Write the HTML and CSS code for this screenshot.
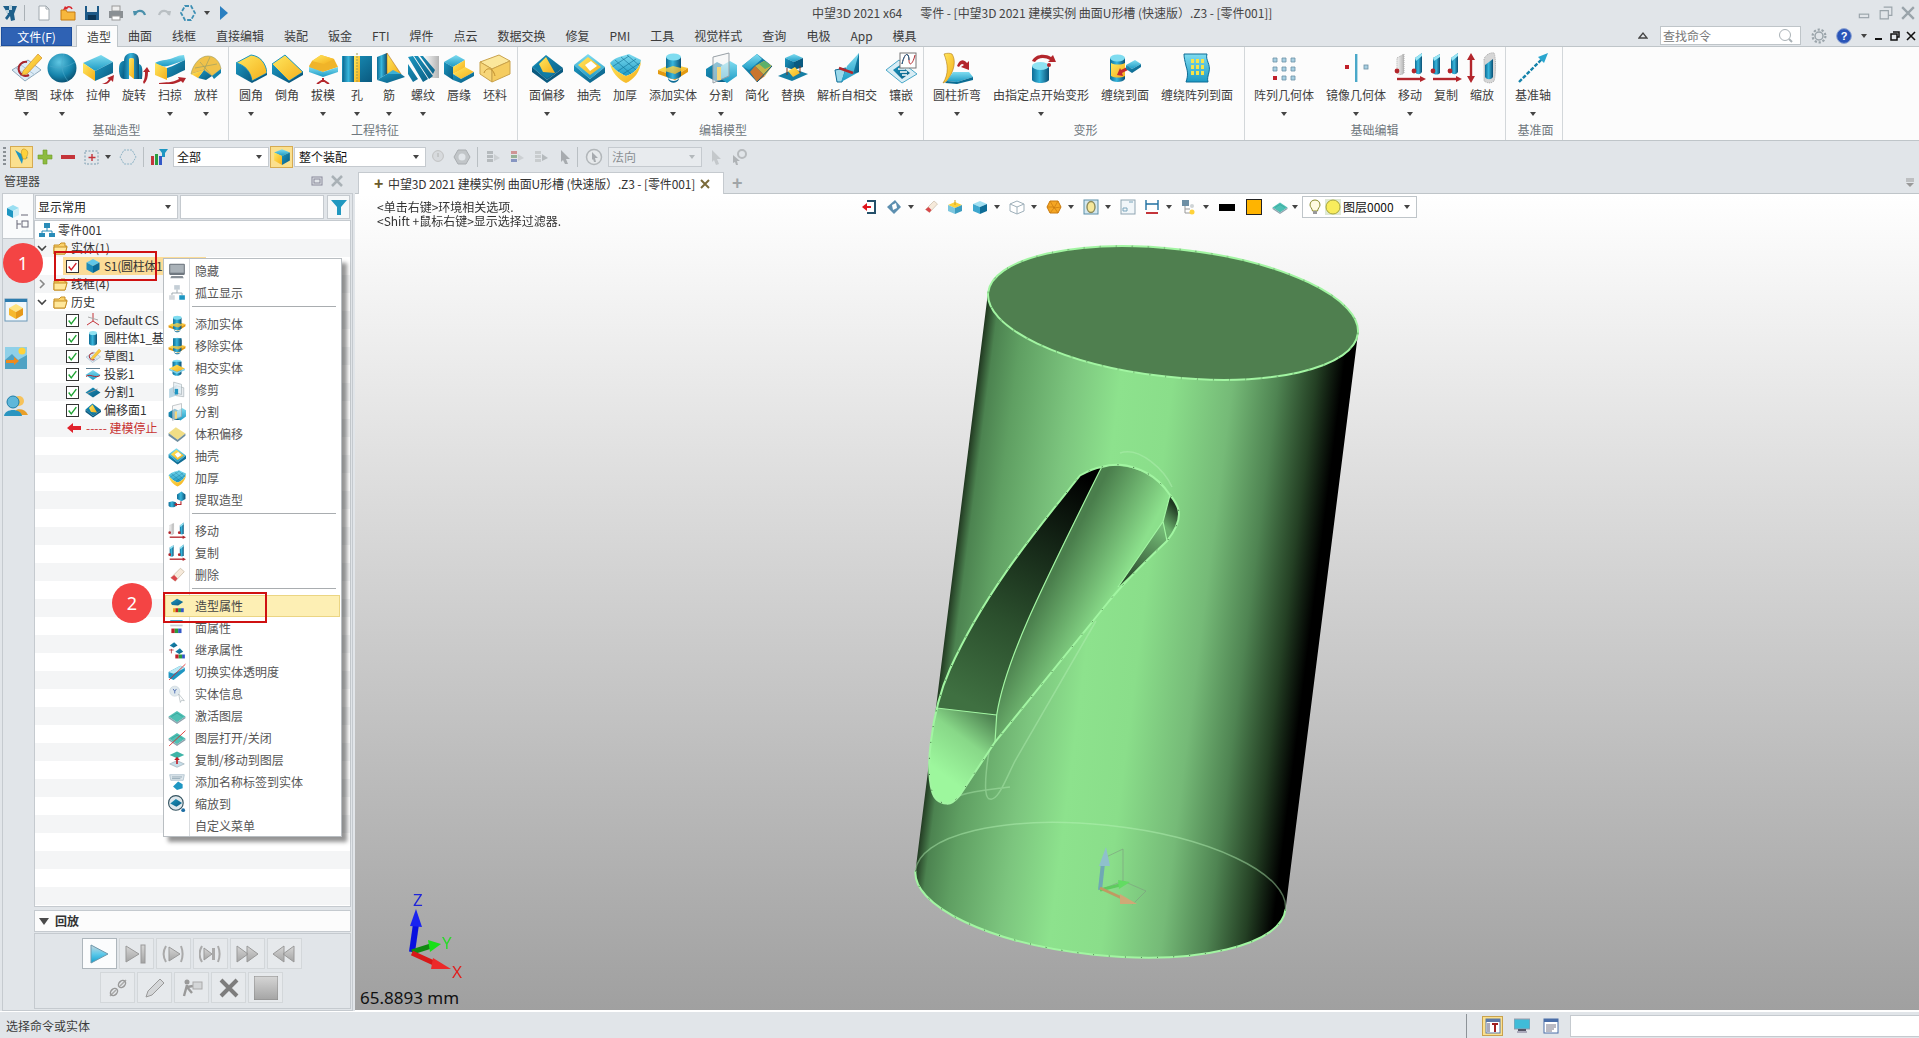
FILE: index.html
```html
<!DOCTYPE html>
<html lang="zh">
<head>
<meta charset="utf-8">
<title>中望3D 2021</title>
<link rel="stylesheet" href="styles.css">
</head>
<body>
<svg class="defs" aria-hidden="true">
<defs>
<linearGradient id="gT" x1="0" y1="0" x2="0" y2="1"><stop offset="0" stop-color="#7fdcf0"/><stop offset="1" stop-color="#1c9ac4"/></linearGradient>
<linearGradient id="gS" x1="0" y1="0" x2="1" y2="1"><stop offset="0" stop-color="#1b96c0"/><stop offset="1" stop-color="#0a5a80"/></linearGradient>
<linearGradient id="gY" x1="0" y1="0" x2="1" y2="1"><stop offset="0" stop-color="#ffe860"/><stop offset="1" stop-color="#f4ae1a"/></linearGradient>
<linearGradient id="gC" x1="0" y1="0" x2="1" y2="0"><stop offset="0" stop-color="#0d6c96"/><stop offset=".45" stop-color="#38b6dc"/><stop offset="1" stop-color="#0a4f74"/></linearGradient>
<linearGradient id="gG" x1="0" y1="0" x2="1" y2="0"><stop offset="0" stop-color="#f4f4f4"/><stop offset="1" stop-color="#b4b4b4"/></linearGradient>
<radialGradient id="gB" cx=".4" cy=".3" r=".8"><stop offset="0" stop-color="#5fc6e2"/><stop offset=".6" stop-color="#1583ab"/><stop offset="1" stop-color="#07415f"/></radialGradient>
<linearGradient id="gPlay" x1="0" y1="0" x2="0" y2="1"><stop offset="0" stop-color="#c9d6dc"/><stop offset=".5" stop-color="#5ec9ea"/><stop offset="1" stop-color="#12a1d0"/></linearGradient>
<linearGradient id="gGray" x1="0" y1="0" x2="0" y2="1"><stop offset="0" stop-color="#d6d6d6"/><stop offset="1" stop-color="#a4a4a4"/></linearGradient>

<g id="sketch"><path d="M2 18 18 8 31 18 15 29Z" fill="#dcebf6" stroke="#8fa9bb"/><path d="M6 16 20 26M11 13 25 23M10 24 23 14" stroke="#a9c3d6" fill="none"/><path d="M17 10A7 7 0 1 0 19 23" fill="none" stroke="#a8242c" stroke-width="2"/><path d="M13 19 28 2 32 6 17 22 12 23Z" fill="url(#gY)" stroke="#d38e2a" stroke-width=".7"/></g>
<g id="sphere"><circle cx="16" cy="16" r="14.5" fill="url(#gB)"/><path d="M4 14C12 17 22 15 29 10M18 2C14 12 16 22 22 29" stroke="#4aa8c9" stroke-width=".6" fill="none"/></g>
<g id="extrude"><path d="M1 11 19 3 31 10 13 19Z" fill="url(#gT)"/><path d="M1 11 13 19V29L1 21Z" fill="url(#gY)"/><path d="M13 19 31 10V21L13 29Z" fill="url(#gS)"/><path d="M20 32C24 31 26 29 27 27L25 26 32 23 31 30 29 28C27 31 24 33 20 32Z" fill="#b3262c"/></g>
<g id="revolve"><path d="M1 17C1 10 4 9 6 9V27C3 27 1 24 1 17Z" fill="url(#gS)"/><path d="M6 9C6 2 11 1 14 1 18 1 21 3 21 9V27H16V7C14 6 12 6 11 7V27H6Z" fill="url(#gC)"/><path d="M11 7C13 6 15 6 16 7V27L11 23Z" fill="url(#gY)"/><path d="M21 12C24 13 25 16 24 27H21Z" fill="url(#gS)"/><path d="M25 30C27 27 27 23 27 20H25L29 15 32 20H30C30 25 29 29 26 32Z" fill="#b3262c"/></g>
<g id="sweep"><path d="M1 11C6 8 12 8 16 7 20 6 24 3 30 3L31 8C26 10 20 12 14 14 9 15 6 14 1 11Z" fill="url(#gT)"/><path d="M1 11 13 16V28L1 23Z" fill="url(#gY)"/><path d="M13 16C20 14 26 10 31 8V18C26 20 20 24 13 26Z" fill="url(#gS)"/><path d="M5 31C12 30 18 31 25 27L24 25 32 26 29 31 27 29C20 33 12 33 5 32Z" fill="#b3262c"/></g>
<g id="loft"><path d="M1 22C3 12 10 4 18 4 25 4 30 10 31 17L22 24 14 18Z" fill="#f0c24a" stroke="#9a9a60" stroke-width=".6"/><path d="M14 18 22 24 16 28 8 26Z" fill="url(#gS)"/><path d="M1 22 14 18 8 26Z" fill="url(#gY)"/><path d="M22 24 31 17V21L24 27Z" fill="#1583ab"/><path d="M10 10 22 24M20 5 14 18M5 16 27 12" stroke="#8f9b6a" stroke-width=".6" fill="none"/></g>
<g id="fillet"><path d="M1 11 16 3C25 4 31 11 32 21L17 29C16 20 10 13 1 11Z" fill="url(#gY)" stroke="#1b96c0"/><path d="M1 11C10 13 16 20 17 29V31L1 22Z" fill="url(#gS)"/><path d="M17 29 32 21V23L17 31Z" fill="#0a5a80"/></g>
<g id="chamfer"><path d="M1 12 14 3 32 20 18 29Z" fill="url(#gY)" stroke="#1b96c0"/><path d="M1 12 18 29V31L1 22Z" fill="url(#gS)"/><path d="M18 29 32 20V23L18 31Z" fill="#0a5a80"/></g>
<g id="draft"><path d="M2 14 5 9 14 3 27 7 31 15 16 20 3 17Z" fill="#f0b429"/><path d="M5 9 14 3 27 7 17 12Z" fill="url(#gY)"/><path d="M2 15 16 20 31 15V20L16 25 2 20Z" fill="url(#gT)"/><path d="M16 26V29M16 28 10 32M16 28 22 32" stroke="#b3262c" stroke-width="2" fill="none"/></g>
<g id="hole"><rect x="1" y="4" width="30" height="26" fill="url(#gS)"/><rect x="2" y="4" width="12" height="26" fill="url(#gC)"/><rect x="13" y="4" width="6" height="26" fill="url(#gY)"/><path d="M16 1V31" stroke="#9e9a52" stroke-dasharray="2 1"/></g>
<g id="rib"><path d="M4 5 14 1V22L4 28Z" fill="url(#gC)"/><path d="M14 1 28 22 14 22Z" fill="url(#gY)" stroke="#a05a10" stroke-width=".5"/><path d="M4 28 14 22 28 22 32 25 14 31Z" fill="url(#gS)"/><path d="M14 22 20 18 28 22Z" fill="#3cb0d6"/></g>
<g id="thread"><rect x="18" y="4" width="14" height="22" fill="url(#gG)"/><path d="M1 5 6 4 21 27 16 30ZM7 4 11 4 26 24 22 27ZM13 4 16 4 28 18 26 22ZM1 12 11 27 6 30 1 22Z" fill="url(#gS)"/></g>
<g id="lip"><path d="M1 10 13 3 22 8 10 15Z" fill="url(#gT)"/><path d="M1 10 10 15V28L1 22Z" fill="url(#gS)"/><path d="M10 15 22 8V16L10 22Z" fill="url(#gY)"/><path d="M10 22 22 15 31 20 18 27Z" fill="url(#gY)"/><path d="M10 22 18 27V31L10 28ZM18 27 31 20V24L18 31Z" fill="url(#gS)"/></g>
<g id="blank"><path d="M1 10 20 3 31 9 13 17Z" fill="#fbe79c" stroke="#c9a24c"/><path d="M1 10 13 17V30L1 22Z" fill="#f7d679" stroke="#c9a24c"/><path d="M13 17 31 9V22L13 30Z" fill="#f5cc60" stroke="#c9a24c"/><path d="M5 21C7 15 14 15 16 24" fill="none" stroke="#c08f30"/></g>
<g id="offset"><path d="M1 15 15 3 32 16 16 28Z" fill="url(#gS)"/><path d="M3 15 15 5 24 21 16 26Z" fill="#0f7da6"/><path d="M8 12 15 5 24 21 12 20Z" fill="url(#gY)"/><path d="M1 15 16 28V31L1 20ZM16 28 32 16V20L16 31Z" fill="#0a5a80"/></g>
<g id="shell"><path d="M1 13 15 2 32 15 17 27Z" fill="url(#gT)"/><path d="M5 13 15 5 28 15 17 23Z" fill="url(#gY)"/><path d="M12 13 18 9 24 14 17 19Z" fill="#fff"/><path d="M1 13 17 27V31L1 19ZM17 27 32 15V21L17 31Z" fill="url(#gS)"/></g>
<g id="thick"><path d="M1 11C6 5 14 4 20 2 24 4 28 6 32 8 31 16 24 22 17 24 12 22 5 18 1 11Z" fill="url(#gT)"/><path d="M6 8 22 22M12 5 27 18M18 3 31 14M3 15 20 4M9 19 27 7M14 22 31 11" stroke="#0f6e94" stroke-width=".6"/><path d="M1 11C5 18 12 22 17 24 24 22 31 16 32 8 32 20 24 28 17 31 10 28 2 20 1 11Z" fill="url(#gY)"/></g>
<g id="addsolid"><path d="M1 18 14 12 31 16 18 24Z" fill="url(#gY)"/><path d="M1 18 18 24V28L1 22ZM18 24 31 16V20L18 28Z" fill="#e39a10"/><path d="M9 5V24C12 28 22 28 24 24V5Z" fill="url(#gC)"/><ellipse cx="16.5" cy="5" rx="7.5" ry="3.5" fill="#7fdcf0"/><path d="M4 18 16 14 28 17 18 22Z" fill="url(#gY)" opacity=".8"/><path d="M11 26C13 30 20 30 22 26V27C20 32 13 32 11 27Z" fill="#0d6c96"/></g>
<g id="split"><path d="M1 17 12 10 22 15 22 30 12 30 1 24Z" fill="url(#gS)"/><path d="M16 14 25 9 32 13V24L22 31 16 27Z" fill="url(#gT)"/><path d="M8 5 24 1V24L8 31Z" fill="#f4f4f4" fill-opacity=".55" stroke="#98a0a6"/><path d="M12 15H16V28H12Z" fill="#f6d67a"/></g>
<g id="simplify"><path d="M1 14 16 2 31 14 16 30Z" fill="url(#gS)"/><path d="M1 14 16 2 21 7 8 18Z" fill="url(#gT)"/><path d="M14 14 23 9 31 14 24 24Z" fill="#c6b348"/><path d="M14 14 24 24 16 30 9 20Z" fill="#c9752e"/><path d="M18 12 24 9 30 14 24 17Z" fill="#5bb06a"/><path d="M16 30 31 14" stroke="#0a5a80"/></g>
<g id="replace"><path d="M8 6 17 2 26 6 17 10Z" fill="url(#gT)"/><path d="M8 6 17 10V18L8 15Z" fill="url(#gS)"/><path d="M17 10 26 6V15L17 18Z" fill="#0a5a80"/><path d="M1 24 17 17 31 22 15 29Z" fill="#157ea4"/><path d="M11 19 18 15 23 21 16 25Z" fill="url(#gY)"/><path d="M10 16V23M23 14V21" stroke="#7a3a20"/></g>
<g id="selfint"><path d="M4 18 15 16 11 30 6 30Z" fill="#9ad8ea" stroke="#0d6c96"/><path d="M16 14 28 1V20L10 30Z" fill="url(#gT)"/><path d="M28 1V20L22 22Z" fill="url(#gS)"/><path d="M8 16 22 21" stroke="#b3262c" stroke-width="2.4"/></g>
<g id="inlay"><path d="M1 18 14 8 32 22 17 31Z" fill="#d9edf5" stroke="#4aa8c9"/><path d="M8 18 15 13 25 21 17 27Z" fill="url(#gS)"/><path d="M13 17H20M15 20H22M17 23H22" stroke="#fff" stroke-width="1.4"/><rect x="15" y="1" width="16" height="15" fill="#fff" stroke="#777"/><path d="M17 12C20-1 24 1 24 8S28 12 30 3" fill="none" stroke="#b3262c"/><path d="M17 12C20-1 24 1 24 8" fill="none" stroke="#0d6c96"/></g>
<g id="bend"><path d="M3 2C6 1 9 1 11 2 15 8 14 18 6 29L2 31C8 22 7 12 3 2Z" fill="url(#gY)" stroke="#b07a12" stroke-width=".6"/><path d="M6 29 12 20 28 20 32 25 16 30Z" fill="url(#gT)"/><path d="M16 30 32 25V28L16 32ZM6 29 16 30V32L4 31Z" fill="#0a6c92"/><path d="M16 14C18 8 22 6 26 11L28 9 28 18 20 15 23 13C21 11 20 12 18 15Z" fill="#b3262c"/></g>
<g id="deform"><path d="M7 14V28C9 32 22 32 24 28V14Z" fill="url(#gC)"/><ellipse cx="15.5" cy="14" rx="8.5" ry="4" fill="#8fe2f2"/><path d="M7 9C10 2 20 1 26 5L28 3 31 10 23 10 25 8C20 5 13 5 10 10Z" fill="#b3262c"/><circle cx="24" cy="13" r="2" fill="#b3262c"/></g>
<g id="wrap"><path d="M1 6V27C3 31 14 31 16 27V6Z" fill="url(#gC)"/><ellipse cx="8.5" cy="6" rx="7.5" ry="3.5" fill="#7fdcf0"/><path d="M2 11C6 13 12 13 16 11V24C12 26 6 26 2 24Z" fill="url(#gY)"/><path d="M20 14 12 18 11 16 8 23 14 24 13 21 21 17Z" fill="#c22a30"/><path d="M17 13 26 8 32 12 23 17Z" fill="url(#gT)"/><path d="M17 13 23 17V21L17 17ZM23 17 32 12V15L23 21Z" fill="url(#gS)"/></g>
<g id="wraparr"><path d="M3 2H26C24 8 30 12 28 20 27 24 26 27 27 30H5C7 24 7 20 5 14 4 9 3 6 3 2Z" fill="url(#gT)" stroke="#0d6c96"/><path d="M10 7h3v4h-3zM15 7h3v4h-3zM20 7h3v4h-3zM10 13h3v4h-3zM15 13h3v4h-3zM20 13h3v4h-3zM10 19h3v4h-3zM15 19h3v4h-3zM20 19h3v4h-3z" fill="#f6e34a"/></g>
<g id="pattern"><path d="M5 6h4v4H5zM14 6h4v4h-4zM23 6h4v4h-4zM5 15h4v4H5zM14 15h4v4h-4zM23 15h4v4h-4zM14 24h4v4h-4zM23 24h4v4h-4z" fill="#a8cfe2" stroke="#6a8fa4" stroke-width=".8"/><path d="M5 24h4v4H5z" fill="#c0202a"/></g>
<g id="mirror"><rect x="15" y="2" width="2.4" height="28" fill="#4aa8c9"/><rect x="5" y="13" width="4" height="4" fill="#c0202a"/><rect x="24" y="13" width="4" height="4" fill="#a8cfe2" stroke="#6a8fa4" stroke-width=".8"/></g>
<g id="move"><path d="M3 6 10 2V21C8 23 5 23 3 21Z" fill="url(#gG)" stroke="#aaa" stroke-dasharray="1 1"/><path d="M21 6 28 1V20C26 23 23 23 21 20Z" fill="url(#gC)"/><path d="M21 6 28 1V4L22 9Z" fill="#9ae6f5"/><circle cx="3" cy="19" r="2.4" fill="#b3262c"/><circle cx="20" cy="19" r="2.4" fill="#b3262c"/><path d="M3 27H27" stroke="#b3262c" stroke-width="2.4"/><path d="M26 24 32 27 26 30Z" fill="#b3262c"/></g>
<g id="copy"><path d="M3 6 10 2V21C8 23 5 23 3 21Z" fill="url(#gC)"/><path d="M21 6 28 1V20C26 23 23 23 21 20Z" fill="url(#gC)"/><path d="M3 6 10 2V5L4 9ZM21 6 28 1V4L22 9Z" fill="#9ae6f5"/><circle cx="3" cy="19" r="2.4" fill="#b3262c"/><circle cx="20" cy="19" r="2.4" fill="#b3262c"/><path d="M3 27H27" stroke="#b3262c" stroke-width="2.4"/><path d="M26 24 32 27 26 30Z" fill="#b3262c"/></g>
<g id="scale"><path d="M5 6V26" stroke="#b3262c" stroke-width="2.4"/><path d="M1 8 5 1 9 8ZM1 24 5 31 9 24Z" fill="#b3262c"/><path d="M18 8C18 4 24 0 28 1 30 4 30 24 28 29 25 32 21 31 18 29Z" fill="#d6d6d6" stroke="#aaa" stroke-dasharray="1 1"/><path d="M19 13 27 7V25C25 28 21 28 19 25Z" fill="url(#gC)"/></g>
<g id="axis"><path d="M2 30 26 6" stroke="#1583ab" stroke-width="2.4" stroke-dasharray="4 1.5"/><path d="M21 5 31 1 27 11Z" fill="#2aa6cf"/></g>

<g id="hide"><rect x="2" y="3" width="28" height="20" rx="2" fill="#707880"/><rect x="4" y="5" width="24" height="14" fill="#aab2b8"/><path d="M6 25H26L28 29H4Z" fill="#888f96"/></g>
<g id="isolate"><rect x="11" y="2" width="10" height="8" fill="#c4ced6"/><path d="M16 10V16M7 20V16H25V20" stroke="#9aa5ac" fill="none" stroke-width="1.6"/><rect x="2" y="20" width="10" height="8" fill="#d4d9dd"/><rect x="20" y="20" width="10" height="8" fill="#1e96c2"/></g>
<g id="remove"><use href="#addsolid"/><path d="M9 2V14C12 17 22 17 24 14V2Z" fill="url(#gC)"/></g>
<g id="intersect"><ellipse cx="16" cy="5" rx="8" ry="3.6" fill="#7fdcf0"/><path d="M8 5V26C11 31 21 31 24 26V5Z" fill="url(#gC)"/><path d="M2 17 16 10 30 17 16 23Z" fill="url(#gY)"/><path d="M2 17 16 23 30 17V20L16 26 2 20Z" fill="#7fd0e8"/></g>
<g id="trim"><path d="M2 14 14 8V26L2 30Z" fill="#b9d6e4"/><path d="M14 8 28 12V28L14 26Z" fill="#e9edf0" stroke="#9aa5ac"/><path d="M10 2 24 6V24L10 20Z" fill="#e2eef4" fill-opacity=".7" stroke="#9aa5ac"/><path d="M12 14H18V24H12Z" fill="#1e96c2"/></g>
<g id="volume"><path d="M1 14 14 4 31 15 17 26Z" fill="#f1de86"/><path d="M1 14 17 26V30L1 19ZM17 26 31 15V19L17 30Z" fill="#6f8e9f"/></g>
<g id="extract"><path d="M1 20 8 18 14 20V26C12 30 3 30 1 26Z" fill="url(#gC)"/><path d="M16 6 24 1 31 6V14L24 18 16 14Z" fill="url(#gC)"/><path d="M15 24H23V18" stroke="#b3262c" stroke-width="2" fill="none"/><path d="M16 21 11 24 16 27Z" fill="#b3262c"/></g>
<g id="eraser"><path d="M5 21 22 4 29 10 13 27Z" fill="#f6eadb" stroke="#b8a78f"/><path d="M5 21 11 16 17 22 13 27Z" fill="#d9464a"/></g>
<g id="attr"><path d="M5 10 16 3 27 9 18 15 7 14Z" fill="url(#gS)"/><rect x="13" y="20" width="5" height="7" fill="#c0202a"/><rect x="18" y="20" width="5" height="7" fill="#2b9d3e"/><rect x="23" y="20" width="5" height="7" fill="#3458c8"/><rect x="9" y="20" width="4" height="7" fill="#e4ae1c"/></g>
<g id="fattr"><rect x="4" y="2" width="22" height="5" fill="#1e96c2"/><rect x="4" y="10" width="22" height="3" fill="#c6cfd5"/><rect x="6" y="17" width="6" height="8" fill="#c0202a"/><rect x="12" y="17" width="6" height="8" fill="#2b9d3e"/><rect x="18" y="17" width="6" height="8" fill="#3458c8"/></g>
<g id="inherit"><path d="M3 8 11 2 17 8 10 12Z" fill="url(#gS)"/><path d="M2 16H10M6 14V22" stroke="#b3262c" stroke-width="1.4"/><path d="M13 19 21 13 27 19 20 23Z" fill="url(#gS)"/><rect x="13" y="24" width="6" height="7" fill="#c0202a"/><rect x="19" y="24" width="6" height="7" fill="#2b9d3e"/><rect x="25" y="24" width="5" height="7" fill="#3458c8"/></g>
<g id="transp"><path d="M1 16 22 5 30 9 30 14 10 30 1 26Z" fill="#1e96c2"/><path d="M1 16 22 5 30 9 10 19Z" fill="#b8e8f4"/><path d="M2 30 31 2" stroke="#d22" stroke-width="1.5"/></g>
<g id="info"><circle cx="12" cy="11" r="9" fill="#dfe8ed" stroke="#c2ced6"/><path d="M9 7 12 11 15 7M12 11V15" stroke="#3458a8" stroke-width="1.4" fill="none"/><path d="M19 16 29 28 24 27 22 31Z" fill="#fff" stroke="#9aa5ac"/></g>
<g id="layer"><path d="M1 17 16 7 31 17 16 27Z" fill="#4fc0b4"/><path d="M1 17 16 27V30L1 20ZM16 27 31 17V20L16 30Z" fill="#8ea2ad"/><path d="M6 17 16 11 26 17" stroke="#2b9a90" fill="none"/></g>
<g id="layeroff"><use href="#layer"/><path d="M2 30 31 3" stroke="#d22" stroke-width="1.5"/></g>
<g id="layercp"><path d="M3 7 16 1 29 7 16 13Z" fill="#3fb5a8"/><path d="M3 23 16 17 29 23 16 29Z" fill="#c6dde8" stroke="#8ea2ad"/><path d="M16 23V15" stroke="#c0202a" stroke-width="3"/><path d="M11 16 16 10 21 16Z" fill="#c0202a"/></g>
<g id="nametag"><path d="M3 3H29L27 13H5Z" fill="#dfe8ed" stroke="#8fa9bb"/><path d="M7 7H25M7 10H22" stroke="#5d7d90"/><path d="M9 24 18 15 26 20 26 27 16 30Z" fill="#1e96c2"/></g>
<g id="zoomto"><circle cx="14" cy="14" r="13" fill="#dfe8ed" stroke="#33525f" stroke-width="2"/><path d="M4 15 14 7 25 14 15 21Z" fill="url(#gS)"/><circle cx="27" cy="27" r="3.4" fill="#1e6ea4"/></g>

<g id="chkg"><path d="M2 6 5 10 11 2" fill="none" stroke="#1ea332" stroke-width="1.7"/></g>
<g id="chkr"><path d="M2 6 5 10 11 2" fill="none" stroke="#d01c24" stroke-width="1.7"/></g>
<g id="folder"><path d="M2 5H7L9 3H13V6H15L13 14H2Z" fill="#fbd26a" stroke="#c68f24"/><path d="M2 7H15L13 14H2Z" fill="#ffe79a" stroke="#c68f24"/></g>
<g id="chev"><path d="M2 4 6 8 10 4" fill="none" stroke="#444" stroke-width="1.6"/></g>
<g id="chevr"><path d="M4 2 8 6 4 10" fill="none" stroke="#888" stroke-width="1.6"/></g>
</defs>
</svg>

<div class="app">
  <header class="titlebar">
    <div class="qat">
      <svg class="q-logo" viewBox="0 0 16 18"><path d="M1 2H7L8 6 10 2H15L12 10 13 16 9 17 8 12 5 16 3 14 6 10Z" fill="#1e5f8a"/><path d="M7 1H10V6H7ZM4 6H7V9H4Z" fill="#bfd4de"/></svg>
      <i class="q-sep"></i>
      <span class="slot"><svg class="i16" viewBox="0 0 16 16"><path d="M3 1H10L13 4V15H3Z" fill="#fff" stroke="#a0a8ae"/><path d="M10 1V4H13" fill="none" stroke="#a0a8ae"/></svg></span>
      <span class="slot"><svg class="i16" viewBox="0 0 16 16"><path d="M1 5H6L7 7H15V15H1Z" fill="#f6b73c" stroke="#c57a12"/><path d="M6 4C7 1 11 1 12 4" stroke="#d8262c" stroke-width="1.6" fill="none"/><path d="M3 5 5 1 8 4Z" fill="#d8262c"/></svg></span>
      <span class="slot"><svg class="i16" viewBox="0 0 16 16"><rect x="1" y="1" width="14" height="14" fill="#1e5a88"/><rect x="3" y="1" width="10" height="6" fill="#dfe6ea"/><rect x="4" y="10" width="8" height="5" fill="#0c3555"/></svg></span>
      <span class="slot"><svg class="i16" viewBox="0 0 16 16"><rect x="4" y="1" width="8" height="5" fill="#eee" stroke="#999"/><rect x="1" y="6" width="14" height="7" fill="#8a8f93"/><rect x="4" y="11" width="8" height="4" fill="#fff" stroke="#999"/></svg></span>
      <span class="slot"><svg class="i16" viewBox="0 0 16 16"><path d="M3 10C4 5 11 4 13 10" fill="none" stroke="#4a90ab" stroke-width="2.2"/><path d="M1 6 6 6 2 11Z" fill="#4a90ab"/></svg></span>
      <span class="slot"><svg class="i16" viewBox="0 0 16 16"><path d="M3 10C5 4 12 5 13 10" fill="none" stroke="#b9bfc3" stroke-width="2.2"/><path d="M15 6 10 6 14 11Z" fill="#b9bfc3"/></svg></span>
      <span class="slot"><svg class="i16" viewBox="0 0 16 16"><path d="M5 1 11 1 15 8 11 15 5 15 1 8Z" fill="none" stroke="#3e8fb4" stroke-width="1.8" stroke-dasharray="4 1.5"/></svg></span>
      <span class="q-drop"><i class="caret"></i></span>
      <span class="q-run"><svg class="i16" viewBox="0 0 16 16"><path d="M4 1 12 8 4 15Z" fill="#2a7fc0"/></svg></span>
    </div>
    <div class="apptitle"><span>中望3D 2021 x64</span><span class="doc-title">零件 - [中望3D 2021 建模实例 曲面U形槽 (快速版）.Z3 - [零件001]]</span></div>
    <div class="winbtns">
      <svg class="w-btn" viewBox="0 0 12 12"><rect x="2" y="7" width="8" height="3" fill="none" stroke="#9aa4aa"/></svg>
      <svg class="w-btn" viewBox="0 0 12 12"><path d="M4 1H11V8H8M1 4H8V11H1Z" fill="none" stroke="#9aa4aa"/></svg>
      <svg class="w-btn" viewBox="0 0 12 12"><path d="M1 1 11 11M11 1 1 11" stroke="#9aa4aa" stroke-width="2"/></svg>
    </div>
  </header>

  <nav class="tabs">
    <div class="tab-file">文件(F)</div>
    <div class="tab tab-on">造型</div>
    <div class="tab">曲面</div><div class="tab">线框</div><div class="tab">直接编辑</div><div class="tab">装配</div><div class="tab">钣金</div><div class="tab">FTI</div><div class="tab">焊件</div><div class="tab">点云</div><div class="tab">数据交换</div><div class="tab">修复</div><div class="tab">PMI</div><div class="tab">工具</div><div class="tab">视觉样式</div><div class="tab">查询</div><div class="tab">电极</div><div class="tab">App</div><div class="tab">模具</div>
    <div class="tabs-right">
      <span class="tr-up"><svg class="i10" viewBox="0 0 10 10"><path d="M1 7 5 2 9 7Z" fill="none" stroke="#444" stroke-width="1.3"/></svg></span>
      <div class="search"><span>查找命令</span><svg class="i16" viewBox="0 0 16 16"><circle cx="7" cy="7" r="5.5" fill="#fff" stroke="#a9b1b6"/><path d="M11 11 14 14" stroke="#a9b1b6" stroke-width="2"/></svg></div>
      <span class="tr-gear"><svg class="i16" viewBox="0 0 16 16"><circle cx="8" cy="8" r="4" fill="none" stroke="#9aa4aa" stroke-width="1.5"/><circle cx="8" cy="8" r="6.4" fill="none" stroke="#9aa4aa" stroke-width="2.2" stroke-dasharray="2.2 1.8"/></svg></span>
      <span class="tr-help"><svg class="i16" viewBox="0 0 16 16"><circle cx="8" cy="8" r="7.4" fill="#2a55b8" stroke="#8fa5d4"/><text x="8" y="12" class="helpq">?</text></svg></span>
      <span class="tr-drop"><i class="caret"></i></span>
      <span class="tr-win"><svg class="i10" viewBox="0 0 10 10"><rect x="1" y="7" width="7" height="2" fill="#111"/></svg></span>
      <span class="tr-win"><svg class="i10" viewBox="0 0 10 10"><path d="M3 1H9V6H7M1 3H7V9H1Z" fill="none" stroke="#111" stroke-width="1.5"/></svg></span>
      <span class="tr-win"><svg class="i10" viewBox="0 0 10 10"><path d="M1 1 9 9M9 1 1 9" stroke="#111" stroke-width="1.6"/></svg></span>
    </div>
  </nav>

  <section class="ribbon">
    <div class="rgroup g1">
      <div class="rbtns">
        <div class="rb w36"><svg class="ri" viewBox="0 0 32 32"><use href="#sketch"/></svg><span>草图</span><i class="caret"></i></div>
        <div class="rb w36"><svg class="ri" viewBox="0 0 32 32"><use href="#sphere"/></svg><span>球体</span><i class="caret"></i></div>
        <div class="rb w36"><svg class="ri" viewBox="0 0 32 32"><use href="#extrude"/></svg><span>拉伸</span></div>
        <div class="rb w36"><svg class="ri" viewBox="0 0 32 32"><use href="#revolve"/></svg><span>旋转</span></div>
        <div class="rb w36"><svg class="ri" viewBox="0 0 32 32"><use href="#sweep"/></svg><span>扫掠</span><i class="caret"></i></div>
        <div class="rb w36"><svg class="ri" viewBox="0 0 32 32"><use href="#loft"/></svg><span>放样</span><i class="caret"></i></div>
      </div>
      <div class="rlabel">基础造型</div>
    </div>
    <div class="rgroup g2">
      <div class="rbtns">
        <div class="rb w36"><svg class="ri" viewBox="0 0 32 32"><use href="#fillet"/></svg><span>圆角</span><i class="caret"></i></div>
        <div class="rb w36"><svg class="ri" viewBox="0 0 32 32"><use href="#chamfer"/></svg><span>倒角</span></div>
        <div class="rb w36"><svg class="ri" viewBox="0 0 32 32"><use href="#draft"/></svg><span>拔模</span><i class="caret"></i></div>
        <div class="rb w32"><svg class="ri" viewBox="0 0 32 32"><use href="#hole"/></svg><span>孔</span><i class="caret"></i></div>
        <div class="rb w32"><svg class="ri" viewBox="0 0 32 32"><use href="#rib"/></svg><span>筋</span><i class="caret"></i></div>
        <div class="rb w36"><svg class="ri" viewBox="0 0 32 32"><use href="#thread"/></svg><span>螺纹</span><i class="caret"></i></div>
        <div class="rb w36"><svg class="ri" viewBox="0 0 32 32"><use href="#lip"/></svg><span>唇缘</span></div>
        <div class="rb w36"><svg class="ri" viewBox="0 0 32 32"><use href="#blank"/></svg><span>坯料</span></div>
      </div>
      <div class="rlabel">工程特征</div>
    </div>
    <div class="rgroup g3">
      <div class="rbtns">
        <div class="rb w48"><svg class="ri" viewBox="0 0 32 32"><use href="#offset"/></svg><span>面偏移</span><i class="caret"></i></div>
        <div class="rb w36"><svg class="ri" viewBox="0 0 32 32"><use href="#shell"/></svg><span>抽壳</span></div>
        <div class="rb w36"><svg class="ri" viewBox="0 0 32 32"><use href="#thick"/></svg><span>加厚</span></div>
        <div class="rb w60"><svg class="ri" viewBox="0 0 32 32"><use href="#addsolid"/></svg><span>添加实体</span><i class="caret"></i></div>
        <div class="rb w36"><svg class="ri" viewBox="0 0 32 32"><use href="#split"/></svg><span>分割</span><i class="caret"></i></div>
        <div class="rb w36"><svg class="ri" viewBox="0 0 32 32"><use href="#simplify"/></svg><span>简化</span></div>
        <div class="rb w36"><svg class="ri" viewBox="0 0 32 32"><use href="#replace"/></svg><span>替换</span></div>
        <div class="rb w72"><svg class="ri" viewBox="0 0 32 32"><use href="#selfint"/></svg><span>解析自相交</span></div>
        <div class="rb w36"><svg class="ri" viewBox="0 0 32 32"><use href="#inlay"/></svg><span>镶嵌</span><i class="caret"></i></div>
      </div>
      <div class="rlabel">编辑模型</div>
    </div>
    <div class="rgroup g4">
      <div class="rbtns">
        <div class="rb w60"><svg class="ri" viewBox="0 0 32 32"><use href="#bend"/></svg><span>圆柱折弯</span><i class="caret"></i></div>
        <div class="rb w108"><svg class="ri" viewBox="0 0 32 32"><use href="#deform"/></svg><span>由指定点开始变形</span><i class="caret"></i></div>
        <div class="rb w60"><svg class="ri" viewBox="0 0 32 32"><use href="#wrap"/></svg><span>缠绕到面</span></div>
        <div class="rb w84"><svg class="ri" viewBox="0 0 32 32"><use href="#wraparr"/></svg><span>缠绕阵列到面</span></div>
      </div>
      <div class="rlabel">变形</div>
    </div>
    <div class="rgroup g5">
      <div class="rbtns">
        <div class="rb w72"><svg class="ri" viewBox="0 0 32 32"><use href="#pattern"/></svg><span>阵列几何体</span><i class="caret"></i></div>
        <div class="rb w72"><svg class="ri" viewBox="0 0 32 32"><use href="#mirror"/></svg><span>镜像几何体</span><i class="caret"></i></div>
        <div class="rb w36"><svg class="ri" viewBox="0 0 32 32"><use href="#move"/></svg><span>移动</span><i class="caret"></i></div>
        <div class="rb w36"><svg class="ri" viewBox="0 0 32 32"><use href="#copy"/></svg><span>复制</span></div>
        <div class="rb w36"><svg class="ri" viewBox="0 0 32 32"><use href="#scale"/></svg><span>缩放</span></div>
      </div>
      <div class="rlabel">基础编辑</div>
    </div>
    <div class="rgroup g6">
      <div class="rbtns">
        <div class="rb w48"><svg class="ri" viewBox="0 0 32 32"><use href="#axis"/></svg><span>基准轴</span><i class="caret"></i></div>
      </div>
      <div class="rlabel">基准面</div>
    </div>
  </section>

  <section class="toolbar">
    <i class="grip"></i>
    <span class="tb tb-on"><svg class="i18" viewBox="0 0 18 18"><path d="M2 2 9 16 10 11 15 10Z" fill="#1e96c2"/><path d="M10 1C14 1 16 4 14 8L13 11H10L9 8C8 5 8 2 10 1Z" fill="#ffd23a" stroke="#c09020" stroke-width=".6"/></svg></span>
    <span class="tb"><svg class="i18" viewBox="0 0 18 18"><path d="M7 2H11V7H16V11H11V16H7V11H2V7H7Z" fill="#8dbb3f" stroke="#6c9a28" stroke-width=".6"/></svg></span>
    <span class="tb w24"><svg class="i18" viewBox="0 0 18 18"><rect x="2" y="7" width="14" height="4" fill="#c4343a"/></svg></span>
    <span class="tb w24"><svg class="i18" viewBox="0 0 18 18"><rect x="2" y="3" width="13" height="13" fill="none" stroke="#7a9db0" stroke-dasharray="2 1.5"/><path d="M9 6V13M5.5 9.5H12.5" stroke="#c4343a" stroke-width="1.4"/></svg></span>
    <span class="tb-drop"><i class="caret"></i></span>
    <span class="tb w24 ml4"><svg class="i18" viewBox="0 0 18 18"><path d="M5 2H13L17 9 13 16H5L1 9Z" fill="none" stroke="#8fb4c6" stroke-dasharray="2 1"/></svg></span>
    <i class="vsep ml3"></i>
    <span class="tb w24 ml3"><svg class="i18" viewBox="0 0 18 18"><rect x="1" y="8" width="3" height="9" fill="#c4343a"/><rect x="5" y="6" width="3" height="11" fill="#2b9d3e"/><rect x="9" y="8" width="3" height="9" fill="#3458c8"/><path d="M9 1H18L15 5V9H12V5Z" fill="#1e96c2"/></svg></span>
    <div class="combo cb-96 ml2"><span>全部</span><i class="caret"></i></div>
    <span class="tb tb-on w23 ml1"><svg class="i18" viewBox="0 0 32 32"><path d="M2 8 16 2 30 8 16 14Z" fill="url(#gT)"/><path d="M2 8 16 14V30L2 22Z" fill="url(#gY)"/><path d="M16 14 30 8V22L16 30Z" fill="url(#gS)"/></svg></span>
    <div class="combo cb-131 ml1"><span>整个装配</span><i class="caret"></i></div>
    <span class="tb w24 dim"><svg class="i16" viewBox="0 0 16 16"><circle cx="8" cy="7" r="5.4" fill="#d6d9db" stroke="#bbb"/><path d="M8 4V8" stroke="#aaa"/></svg></span>
    <span class="tb w23 dim"><svg class="i18" viewBox="0 0 18 18"><path d="M5 2H13L17 9 13 16H5L1 9Z" fill="#bcc0c3" stroke="#a1a5a8"/><circle cx="9" cy="9" r="3.5" fill="#e1e5e9"/></svg></span>
    <i class="vsep ml4"></i>
    <span class="tb w24 ml3 dim"><svg class="i16" viewBox="0 0 16 16"><path d="M2 2H8V5H2ZM2 6H8V9H2ZM2 10H8V13H2Z" fill="#aeb3b6"/><path d="M9 5 15 9 9 12Z" fill="#c9cdd0"/></svg></span>
    <span class="tb w24 dim"><svg class="i16" viewBox="0 0 16 16"><path d="M2 2H8V5H2Z" fill="#c88"/><path d="M2 6H8V9H2Z" fill="#8a8"/><path d="M2 10H8V13H2Z" fill="#78b"/><path d="M9 5 15 9 9 12Z" fill="#c9cdd0"/></svg></span>
    <span class="tb w24 dim"><svg class="i16" viewBox="0 0 16 16"><path d="M2 2H8V5H2ZM2 6H8V9H2ZM2 10H8V13H2Z" fill="#c4c8ca"/><path d="M9 5 15 9 9 12Z" fill="#aeb3b6"/></svg></span>
    <span class="tb w24 dim"><svg class="i16" viewBox="0 0 16 16"><path d="M4 1 13 10 9 10 11 15 8 15 6 11 4 13Z" fill="#9da2a5"/></svg></span>
    <i class="vsep"></i>
    <span class="tb w24 ml4 dim"><svg class="i18" viewBox="0 0 18 18"><circle cx="9" cy="9" r="7.5" fill="#e8eaec" stroke="#aaafb2" stroke-width="1.5"/><path d="M7 4 13 10 10 10 11 14 9 14 8 11 7 12Z" fill="#9da2a5"/></svg></span>
    <div class="combo cb-94 ml2 combo-off"><span>法向</span><i class="caret"></i></div>
    <span class="tb w24 ml2 dim"><svg class="i18" viewBox="0 0 18 18"><path d="M5 2 14 11 10 11 12 16 9 17 7 12 5 14Z" fill="#bfc3c6"/></svg></span>
    <span class="tb w24 dim"><svg class="i18" viewBox="0 0 18 18"><path d="M2 7 9 13 6 13 7 17 5 17 4 14 2 15Z" fill="#a7abae"/><circle cx="11" cy="6" r="4" fill="none" stroke="#b0b4b7" stroke-width="2"/></svg></span>
  </section>

  <main class="workspace">
    <aside class="panel">
      <div class="phead"><span>管理器</span><span class="phead-ic"><svg class="i12" viewBox="0 0 12 12"><rect x="1" y="2" width="10" height="8" fill="none" stroke="#889"/><rect x="3" y="4" width="6" height="4" fill="none" stroke="#889"/></svg><svg class="i12 ml8" viewBox="0 0 12 12"><path d="M1 1 11 11M11 1 1 11" stroke="#a9b1b6" stroke-width="2.5"/></svg></span></div>
      <div class="pbody">
        <div class="rail">
          <div class="rail-tab"><svg class="rail-ic" viewBox="0 0 28 28"><path d="M3 6 9 3 15 6 9 9Z" fill="#9adff2"/><path d="M3 6 9 9V16L3 13Z" fill="#1e96c2"/><path d="M9 9 15 6V13L9 16Z" fill="#cfeef7"/><path d="M17 13H24M13 18V27M13 22H17" stroke="#667"/><rect x="18" y="19" width="6" height="6" fill="none" stroke="#667"/></svg></div>
          <svg class="rail-i r1" viewBox="0 0 24 24"><rect x="1" y="1" width="22" height="22" fill="#f1f7fb" stroke="#6b98b8"/><rect x="1" y="1" width="22" height="3" fill="#2d7cae"/><path d="M5 10 12 6 19 10 12 14Z" fill="#ffe480"/><path d="M5 10 12 14V21L5 17Z" fill="#f6b82e"/><path d="M12 14 19 10V17L12 21Z" fill="#e6991a"/></svg>
          <svg class="rail-i r2" viewBox="0 0 24 24"><rect x="1" y="1" width="22" height="22" fill="#8fd0e8"/><path d="M1 14 8 8 14 14 23 9V23H1Z" fill="#4fa2c4"/><circle cx="18" cy="5" r="3.5" fill="#ffd23a"/><path d="M2 14H10V11L15 15 10 19V17H2Z" fill="#ee8a1e"/></svg>
          <svg class="rail-i r3" viewBox="0 0 24 24"><circle cx="15" cy="8" r="5" fill="#f6c25a"/><path d="M9 22C10 15 20 14 24 22Z" fill="#e89f2a"/><circle cx="9" cy="9" r="6" fill="#5fb7da" stroke="#1e7ea8"/><path d="M0 23C1 15 17 15 18 23Z" fill="#2a95c0"/></svg>
        </div>
        <div class="pcontent">
          <div class="mtop">
            <div class="mcombo"><span>显示常用</span><i class="caret"></i></div>
            <div class="msearch"></div>
            <div class="mfilter"><svg class="i18" viewBox="0 0 18 18"><path d="M1 2H17L11 9V17H7V9Z" fill="#2098c0"/></svg></div>
          </div>
          <div class="tree">
            <div class="row lvl0"><svg class="i16" viewBox="0 0 16 16"><rect x="5" y="1" width="6" height="5" fill="#2a8cb8"/><path d="M8 6V9M3 11V9H13V11" stroke="#2a8cb8" fill="none"/><rect x="0" y="11" width="6" height="4" fill="#2a8cb8"/><rect x="10" y="11" width="6" height="4" fill="#2a8cb8"/></svg><span>零件001</span></div>
            <div class="row lvl1"><svg class="chev" viewBox="0 0 12 12"><use href="#chev"/></svg><svg class="i16 fold" viewBox="0 0 16 16"><use href="#folder"/></svg><span>实体(1)</span></div>
            <div class="row lvl2 sel"><i class="chk"><svg viewBox="0 0 13 12"><use href="#chkr"/></svg></i><svg class="i16" viewBox="0 0 32 32"><path d="M3 9 16 2 29 9 16 16Z" fill="#5fc6e8"/><path d="M3 9 16 16V30L3 23Z" fill="#1a8ab8"/><path d="M16 16 29 9V23L16 30Z" fill="#0a6a98"/></svg><span class="tight">S1(圆柱体1</span></div>
            <div class="row lvl1"><svg class="chev" viewBox="0 0 12 12"><use href="#chevr"/></svg><svg class="i16 fold" viewBox="0 0 16 16"><use href="#folder"/></svg><span>线框(4)</span></div>
            <div class="row lvl1"><svg class="chev" viewBox="0 0 12 12"><use href="#chev"/></svg><svg class="i16 fold" viewBox="0 0 16 16"><use href="#folder"/></svg><span>历史</span></div>
            <div class="row lvl2"><i class="chk"><svg viewBox="0 0 13 12"><use href="#chkg"/></svg></i><svg class="i16" viewBox="0 0 16 16"><path d="M8 1V9L14 13M8 9 2 13" stroke="#c4343a" fill="none"/><path d="M3 5 13 8" stroke="#aaa"/></svg><span class="tight">Default CS</span></div>
            <div class="row lvl2"><i class="chk"><svg viewBox="0 0 13 12"><use href="#chkg"/></svg></i><svg class="i16" viewBox="0 0 16 16"><path d="M4 3V14C6 16 10 16 12 14V3Z" fill="url(#gC)"/><ellipse cx="8" cy="3" rx="4" ry="2" fill="#8fe2f2"/></svg><span class="tight">圆柱体1_基</span></div>
            <div class="row lvl2"><i class="chk"><svg viewBox="0 0 13 12"><use href="#chkg"/></svg></i><svg class="i16" viewBox="0 0 32 32"><use href="#sketch"/></svg><span>草图1</span></div>
            <div class="row lvl2"><i class="chk"><svg viewBox="0 0 13 12"><use href="#chkg"/></svg></i><svg class="i16" viewBox="0 0 32 32"><path d="M2 5H30" stroke="#5f7d90" stroke-width="2"/><path d="M1 18 16 8 31 18 16 28Z" fill="url(#gT)"/><path d="M2 21C10 14 20 26 30 19" stroke="#b3262c" stroke-width="2" fill="none"/></svg><span>投影1</span></div>
            <div class="row lvl2"><i class="chk"><svg viewBox="0 0 13 12"><use href="#chkg"/></svg></i><svg class="i16" viewBox="0 0 32 32"><path d="M1 17 16 7 31 17 16 27Z" fill="url(#gS)"/><path d="M4 19 25 10" stroke="#999" stroke-width="2"/></svg><span>分割1</span></div>
            <div class="row lvl2"><i class="chk"><svg viewBox="0 0 13 12"><use href="#chkg"/></svg></i><svg class="i16" viewBox="0 0 32 32"><use href="#offset"/></svg><span>偏移面1</span></div>
            <div class="row lvl2 stop"><svg class="stop-a" viewBox="0 0 16 12"><path d="M1 6 7 1V4H15V8H7V11Z" fill="#e0222c"/></svg><span>----- 建模停止</span></div>
          </div>
          <div class="rphead"><i class="caret caret-l"></i><b>回放</b></div>
          <div class="replay">
            <div class="rp-row">
              <span class="rp rp-on"><svg class="i22" viewBox="0 0 22 22"><path d="M3 2 20 11 3 20Z" fill="url(#gPlay)" stroke="#6d97ab"/></svg></span>
              <span class="rp"><svg class="i22" viewBox="0 0 22 22"><path d="M1 3 14 11 1 19Z" fill="url(#gGray)" stroke="#999"/><rect x="16" y="2" width="4" height="18" fill="url(#gGray)" stroke="#999"/></svg></span>
              <span class="rp"><svg class="i22" viewBox="0 0 22 22"><path d="M7 4 18 11 7 18Z" fill="url(#gGray)" stroke="#999"/><path d="M4 3C1 8 1 14 4 19M19 3C21 8 21 14 19 19" fill="none" stroke="#aaa" stroke-width="2"/></svg></span>
              <span class="rp"><svg class="i22" viewBox="0 0 22 22"><path d="M5 5 13 11 5 17Z" fill="url(#gGray)" stroke="#999"/><rect x="13" y="5" width="3" height="12" fill="#aaa"/><path d="M3 3C0 8 0 14 3 19M19 3C21 8 21 14 19 19" fill="none" stroke="#aaa" stroke-width="2"/></svg></span>
              <span class="rp"><svg class="i22" viewBox="0 0 22 22"><path d="M1 3 12 11 1 19ZM11 3 22 11 11 19Z" fill="url(#gGray)" stroke="#999"/></svg></span>
              <span class="rp"><svg class="i22" viewBox="0 0 22 22"><path d="M21 3 10 11 21 19ZM11 3 0 11 11 19Z" fill="url(#gGray)" stroke="#999"/></svg></span>
            </div>
            <div class="rp-row rp-row2">
              <span class="rp"><svg class="i22" viewBox="0 0 22 22"><path d="M3 19 9 13M13 9 19 3" stroke="#aaa" stroke-width="1.5"/><ellipse cx="7" cy="15" rx="4" ry="3" fill="none" stroke="#999" stroke-width="1.5" transform="rotate(-45 7 15)"/><ellipse cx="15" cy="7" rx="4" ry="3" fill="none" stroke="#999" stroke-width="1.5" transform="rotate(-45 15 7)"/></svg></span>
              <span class="rp"><svg class="i22" viewBox="0 0 22 22"><path d="M2 20 4 14 16 2 20 6 8 18Z" fill="#d4d6d8" stroke="#999"/></svg></span>
              <span class="rp"><svg class="i22" viewBox="0 0 22 22"><circle cx="6" cy="5" r="2.5" fill="#999"/><path d="M6 8 3 19M6 10 11 16M6 10 12 9" stroke="#999" stroke-width="2.4" fill="none"/><rect x="12" y="5" width="9" height="7" fill="#d4d6d8" stroke="#aaa"/></svg></span>
              <span class="rp"><svg class="i22" viewBox="0 0 22 22"><path d="M3 3 19 19M19 3 3 19" stroke="#7d7d7d" stroke-width="4"/></svg></span>
              <span class="rp"><svg class="i24" viewBox="0 0 24 24"><rect width="24" height="24" fill="url(#gGray)" stroke="#8a8a8a"/></svg></span>
            </div>
          </div>
        </div>
      </div>
    </aside>

    <section class="canvas">
      <div class="ctabs">
        <div class="ctab"><b class="ctab-plus">+</b><span class="ctab-name">中望3D 2021 建模实例 曲面U形槽 (快速版）.Z3 - [零件001]</span><svg class="i10 ctab-x" viewBox="0 0 10 10"><path d="M1 1 9 9M9 1 1 9" stroke="#7a6a3a" stroke-width="2"/></svg></div>
        <b class="ctab-add">+</b>
        <span class="ctab-menu"><svg class="i10" viewBox="0 0 10 10"><path d="M1 1H9M1 3H9" stroke="#999"/><path d="M1 5H9L5 9Z" fill="#999"/></svg></span>
      </div>
      <div class="view">
        <p class="hint">&lt;单击右键&gt;环境相关选项.<br>&lt;Shift +鼠标右键&gt;显示选择过滤器.</p>
        <svg class="model" viewBox="355 193 1564 817">
          <defs>
            <linearGradient id="body" gradientUnits="userSpaceOnUse" x1="952" y1="580" x2="1322" y2="627">
              <stop offset="0" stop-color="#223a22"/><stop offset=".03" stop-color="#4c8350"/><stop offset=".1" stop-color="#5f9f62"/><stop offset=".25" stop-color="#7cc57e"/><stop offset=".38" stop-color="#8de28d"/><stop offset=".52" stop-color="#8ade8a"/><stop offset=".68" stop-color="#75ba77"/><stop offset=".8" stop-color="#4f8452"/><stop offset=".9" stop-color="#244024"/><stop offset=".97" stop-color="#000"/><stop offset="1" stop-color="#000"/>
            </linearGradient>
            <linearGradient id="floor" gradientUnits="userSpaceOnUse" x1="1008" y1="660" x2="1065" y2="690"><stop offset="0" stop-color="#4a7e4c"/><stop offset="1" stop-color="#8ce08c"/></linearGradient>
            <linearGradient id="wall" gradientUnits="userSpaceOnUse" x1="1085" y1="475" x2="965" y2="700"><stop offset="0" stop-color="#000"/><stop offset=".3" stop-color="#142516"/><stop offset=".65" stop-color="#2b4f2d"/><stop offset="1" stop-color="#3f7041"/></linearGradient>
            <linearGradient id="lower" gradientUnits="userSpaceOnUse" x1="945" y1="775" x2="990" y2="715"><stop offset="0" stop-color="#9df79d"/><stop offset=".55" stop-color="#88d888"/><stop offset="1" stop-color="#4f8452"/></linearGradient>
            <linearGradient id="sliver" gradientUnits="userSpaceOnUse" x1="1165" y1="525" x2="1180" y2="510"><stop offset="0" stop-color="#6ab06c"/><stop offset="1" stop-color="#1e3620"/></linearGradient>
            <linearGradient id="sliver2" gradientUnits="userSpaceOnUse" x1="1125" y1="590" x2="1165" y2="525"><stop offset="0" stop-color="#1e3620"/><stop offset="1" stop-color="#79c27b"/></linearGradient>
            <path id="slotpath" d="M1101.7 466C1108 464 1114 463.5 1120 463.8 1130 464.5 1139 468 1146.7 472 1156 477 1164 485 1170 494 1175 500 1179 507 1179 513 1179 521 1175 530 1167 540 1150 556 1125 580 1106.7 603L995 741 960 794C955 800 950 803 946.7 802.6 940 802 934 798 932 790 928 775 929 755 931 740 934 715 941 688 950 668 985 590 1040 525 1080 474.5 1088 470 1095 467 1101.7 466Z"/>
            <ellipse id="topell" cx="1173" cy="312" rx="186" ry="64" transform="rotate(6.3 1173 312)"/>
            <path id="botedge" d="M915.5 869.6A186 65 6 0 0 1285.5 908.4"/>
          </defs>
          <path d="M988 291.6 915.5 869.6A186 65 6 0 0 1285.5 908.4L1358 332.4A186 64 6.3 0 0 988 291.6Z" fill="url(#body)"/>
          <path d="M915.5 869.6A186 65 6 0 1 1285.5 908.4" fill="none" stroke="#b8f3b8" stroke-opacity=".45" stroke-width="1.5"/>
          <path d="M1120 452C1140 445 1165 470 1172 486M1096 620 1015 760C1005 780 998 800 990 798 980 798 990 745 990 745M958 795C975 789 995 788 1010 786" fill="none" stroke="#b8f3b8" stroke-opacity=".4" stroke-width="1.5"/>
          <use href="#topell" fill="#4f7f4f"/>
          <path d="M1101.7 466C1114 463 1130 465 1146.7 472 1156 477 1164 485 1170 494L1163 520.5 1118 586 1106.7 603 995 741 996.7 714C1005 660 1040 590 1101.7 466Z" fill="url(#floor)"/>
          <path d="M1101.7 466C1095 467 1088 470 1080 474.5 1040 525 985 590 950 668 944 682 940 695 936.7 707L996.7 714C1005 660 1040 590 1101.7 466Z" fill="url(#wall)"/>
          <path d="M936.7 707 996.7 714C997 722 996 732 995 741L960 794C955 800 950 803 946.7 802.6 940 802 934 798 932 790 928 775 929 755 931 740 933 725 934 715 936.7 707Z" fill="url(#lower)"/>
          <path d="M1170 494C1175 500 1179 507 1179 513 1179 521 1175 530 1167 540L1163 520.5Z" fill="url(#sliver)"/>
          <path d="M1163 520.5 1167 540C1150 556 1135 571 1118 586Z" fill="url(#sliver2)"/>
          <g class="edge">
            <use href="#slotpath"/>
            <path class="thin" d="M1101.7 466C1040 590 1005 660 996.7 714L995 741M936.7 707 996.7 714M1163 520.5 1167 540M1163 520.5 1118 586M1163 520.5 1170 494"/>
            <use href="#topell"/>
            <use href="#botedge"/>
          </g>
          <g class="dash">
            <use href="#slotpath"/>
            <use href="#topell"/>
            <use href="#botedge"/>
          </g>
          <g class="ghost-triad">
            <path d="M1100 889 1123 880V848L1102 858M1123 880 1146 890 1133 903 1112 893" fill="none" stroke="#7d9a80" stroke-width=".6"/>
            <path d="M1100 889 1103 862" stroke="#6fa8b5" stroke-width="4"/><path d="M1099 865 1106 846 1110 865Z" fill="#8fc0cc"/>
            <path d="M1100 889 1120 884" stroke="#5ecb5e" stroke-width="3"/><path d="M1118 879 1130 881 1119 888Z" fill="#62dc62"/>
            <path d="M1100 887 1124 898" stroke="#c09a62" stroke-width="3"/><path d="M1120 893 1137 903 1120 903Z" fill="#cfa976"/>
          </g>
          <g class="triad">
            <path d="M412 951 416 923" stroke="#0810e0" stroke-width="6"/><path d="M410 925 416 908 422 926Z" fill="#1a24f0"/>
            <path d="M412 951 431 945" stroke="#0f8a0f" stroke-width="5"/><path d="M428 939 441 943 430 951Z" fill="#18e018"/>
            <path d="M412 952 436 963" stroke="#d81818" stroke-width="5"/><path d="M433 957 451 968 431 968Z" fill="#ec2a2a"/>
            <text x="413" y="905" class="tz">Z</text><text x="442" y="948" class="ty">Y</text><text x="452" y="977" class="tx">X</text>
          </g>
        </svg>
        <div class="vtools">
          <span class="vt"><svg class="i16" viewBox="0 0 16 16"><path d="M6 2H14V14H6" fill="#fff" stroke="#24506a" stroke-width="2"/><path d="M1 8 6 4V7H10V9H6V12Z" fill="#e0141c"/></svg></span>
          <span class="vt vt-d"><svg class="i16" viewBox="0 0 16 16"><path d="M1 8 9 1 15 8 8 15Z" fill="#5d8fb0"/><path d="M6 6 10 4 11 9 7 11Z" fill="#fff"/></svg><i class="caret"></i></span>
          <span class="vt"><svg class="i16" viewBox="0 0 32 32"><use href="#eraser"/></svg></span>
          <span class="vt"><svg class="i16" viewBox="0 0 16 16"><path d="M1 6 8 3 15 6 8 9Z" fill="#ffd23a"/><path d="M1 6 8 9V15L1 12Z" fill="#7cc6de"/><path d="M8 9 15 6V12L8 15Z" fill="#3d9dc0"/><path d="M8 1V6" stroke="#d0a020"/></svg></span>
          <span class="vt vt-d"><svg class="i16" viewBox="0 0 16 16"><path d="M1 5 8 2 15 5 8 8Z" fill="#a2e0f2"/><path d="M1 5 8 8V15L1 12Z" fill="#3da7cf"/><path d="M8 8 15 5V12L8 15Z" fill="#0d6c96"/></svg><i class="caret"></i></span>
          <span class="vt vt-d"><svg class="i16" viewBox="0 0 16 16"><path d="M1 5 8 2 15 5V12L8 15 1 12ZM1 5 8 8 15 5M8 8V15" fill="#fff" stroke="#9fb0ba"/></svg><i class="caret"></i></span>
          <span class="vt vt-d"><svg class="i16" viewBox="0 0 16 16"><path d="M4 2H12L15 8 12 14H4L1 8Z" fill="#f5a623" stroke="#c87a10"/><path d="M4 2 8 9 12 2M1 8H8L12 14M4 14 8 9 15 8" stroke="#c87a10" fill="none" stroke-width=".7"/></svg><i class="caret"></i></span>
          <span class="vt vt-d"><svg class="i16" viewBox="0 0 16 16"><rect x="1" y="1" width="14" height="14" fill="#d4e8f0" stroke="#5d8fa8"/><ellipse cx="8" cy="8" rx="4" ry="5.5" fill="#f6e79a" stroke="#8d8a5a" stroke-width="1.4"/></svg><i class="caret"></i></span>
          <span class="vt"><svg class="i16" viewBox="0 0 16 16"><rect x="1" y="1" width="14" height="14" fill="#f1f6f9" stroke="#8fa5b2"/><path d="M3 12H7V9H3ZM9 3H13" stroke="#7aa5bc" fill="none"/></svg></span>
          <span class="vt vt-d"><svg class="i16" viewBox="0 0 16 16"><path d="M2 1V11M14 1V11M2 5H14" stroke="#1f6fa0" stroke-width="1.4"/><path d="M2 14H14" stroke="#c4343a" stroke-width="2"/></svg><i class="caret"></i></span>
          <span class="vt vt-d vt-net"><svg class="i16" viewBox="0 0 16 16"><rect x="1" y="1" width="7" height="6" fill="#6e8fa4"/><path d="M4 7V14H9M4 10H9" stroke="#999" fill="none"/><circle cx="11" cy="7" r="2" fill="#cfd4d6"/><circle cx="11" cy="13" r="2.5" fill="#ffd23a"/></svg><i class="caret"></i></span>
          <span class="vt vt-black"></span>
          <span class="vt vt-orange"></span>
          <span class="vt vt-d vt-layer"><svg class="i16" viewBox="0 0 32 32"><use href="#layer"/></svg><i class="caret"></i></span>
          <div class="layercombo"><svg class="i16" viewBox="0 0 16 16"><path d="M8 1C11 1 13 3 13 6 13 8 11 9 10.5 12H5.5C5 9 3 8 3 6 3 3 5 1 8 1Z" fill="#fffbe0" stroke="#8b8b2e"/><rect x="6" y="12" width="4" height="3" fill="#999"/></svg><svg class="i16 lc-dot" viewBox="0 0 16 16"><rect x="0" y="0" width="16" height="16" fill="#dfe9d4"/><circle cx="8" cy="8" r="7" fill="#f8ec5c" stroke="#a8a63c"/></svg><span>图层0000</span><i class="caret"></i></div>
        </div>
        <div class="measure">65.8893 mm</div>
      </div>
    </section>
  </main>

  <footer class="status">
    <span class="st-text">选择命令或实体</span>
    <i class="st-sep"></i>
    <span class="st-btn st-on"><svg class="i16" viewBox="0 0 16 16"><rect x="1" y="1" width="14" height="14" fill="#fff" stroke="#5a78a8"/><rect x="1" y="1" width="14" height="3" fill="#5a78a8"/><rect x="2" y="5" width="3" height="9" fill="#aab"/><path d="M7 6H13M10 6V14" stroke="#a02020" stroke-width="2"/></svg></span>
    <span class="st-btn"><svg class="i16" viewBox="0 0 16 16"><rect x="0" y="1" width="16" height="10" fill="#3fbcd8" stroke="#99a"/><rect x="4" y="11" width="8" height="2" fill="#556"/><rect x="3" y="13" width="10" height="2" fill="#aab"/></svg></span>
    <span class="st-btn"><svg class="i16" viewBox="0 0 16 16"><rect x="1" y="1" width="14" height="14" fill="#fff" stroke="#4a6ea8"/><rect x="1" y="1" width="14" height="3" fill="#4a6ea8"/><path d="M3 7H13M3 9H13M3 11H11M3 13H9" stroke="#778"/></svg></span>
    <div class="st-input"></div>
  </footer>

  <div class="ctxmenu">
    <div class="mi"><svg class="mic" viewBox="0 0 32 32"><use href="#hide"/></svg><span>隐藏</span></div>
    <div class="mi"><svg class="mic" viewBox="0 0 32 32"><use href="#isolate"/></svg><span>孤立显示</span></div>
    <div class="msep"></div>
    <div class="mi"><svg class="mic" viewBox="0 0 32 32"><use href="#addsolid"/></svg><span>添加实体</span></div>
    <div class="mi"><svg class="mic" viewBox="0 0 32 32"><use href="#remove"/></svg><span>移除实体</span></div>
    <div class="mi"><svg class="mic" viewBox="0 0 32 32"><use href="#intersect"/></svg><span>相交实体</span></div>
    <div class="mi"><svg class="mic" viewBox="0 0 32 32"><use href="#trim"/></svg><span>修剪</span></div>
    <div class="mi"><svg class="mic" viewBox="0 0 32 32"><use href="#split"/></svg><span>分割</span></div>
    <div class="mi"><svg class="mic" viewBox="0 0 32 32"><use href="#volume"/></svg><span>体积偏移</span></div>
    <div class="mi"><svg class="mic" viewBox="0 0 32 32"><use href="#shell"/></svg><span>抽壳</span></div>
    <div class="mi"><svg class="mic" viewBox="0 0 32 32"><use href="#thick"/></svg><span>加厚</span></div>
    <div class="mi"><svg class="mic" viewBox="0 0 32 32"><use href="#extract"/></svg><span>提取造型</span></div>
    <div class="msep"></div>
    <div class="mi"><svg class="mic" viewBox="0 0 32 32"><use href="#move"/></svg><span>移动</span></div>
    <div class="mi"><svg class="mic" viewBox="0 0 32 32"><use href="#copy"/></svg><span>复制</span></div>
    <div class="mi"><svg class="mic" viewBox="0 0 32 32"><use href="#eraser"/></svg><span>删除</span></div>
    <div class="msep"></div>
    <div class="mi mi-on"><svg class="mic" viewBox="0 0 32 32"><use href="#attr"/></svg><span>造型属性</span></div>
    <div class="mi"><svg class="mic" viewBox="0 0 32 32"><use href="#fattr"/></svg><span>面属性</span></div>
    <div class="mi"><svg class="mic" viewBox="0 0 32 32"><use href="#inherit"/></svg><span>继承属性</span></div>
    <div class="mi"><svg class="mic" viewBox="0 0 32 32"><use href="#transp"/></svg><span>切换实体透明度</span></div>
    <div class="mi"><svg class="mic" viewBox="0 0 32 32"><use href="#info"/></svg><span>实体信息</span></div>
    <div class="mi"><svg class="mic" viewBox="0 0 32 32"><use href="#layer"/></svg><span>激活图层</span></div>
    <div class="mi"><svg class="mic" viewBox="0 0 32 32"><use href="#layeroff"/></svg><span>图层打开/关闭</span></div>
    <div class="mi"><svg class="mic" viewBox="0 0 32 32"><use href="#layercp"/></svg><span>复制/移动到图层</span></div>
    <div class="mi"><svg class="mic" viewBox="0 0 32 32"><use href="#nametag"/></svg><span>添加名称标签到实体</span></div>
    <div class="mi"><svg class="mic" viewBox="0 0 32 32"><use href="#zoomto"/></svg><span>缩放到</span></div>
    <div class="mi"><span class="mi-noicon">自定义菜单</span></div>
  </div>

  <div class="mark m1">1</div>
  <div class="mark m2">2</div>
  <div class="redbox b1"></div>
  <div class="redbox b2"></div>
</div>
</body>
</html>
```
FILE: styles.css
```css
*{box-sizing:border-box;margin:0;padding:0}
html,body{width:100%;height:100%;overflow:hidden}
body{font:12px/16px "Noto Sans CJK SC","Noto Sans",sans-serif;color:#3c3c3c;background:#e1e5e9}
i{display:inline-block;font-style:normal}
svg{display:block;flex:none}
.defs{position:absolute;width:0;height:0}
.i10{width:10px;height:10px}.i12{width:12px;height:12px}.i16{width:16px;height:16px}.i18{width:18px;height:18px}.i22{width:22px;height:22px}.i24{width:24px;height:24px}
.ml1{margin-left:1px}.ml2{margin-left:2px}.ml3{margin-left:3px}.ml4{margin-left:4px}.ml8{margin-left:8px}
.caret{width:0;height:0;border:3.5px solid transparent;border-top:4px solid #444;border-bottom:0;flex:none}

.app{position:relative;width:1919px;height:1038px;overflow:hidden;display:flex;flex-direction:column;background:#e1e5e9}

.titlebar{height:25px;display:flex;align-items:center;flex:none}
.qat{width:812px;display:flex;align-items:center;padding-left:2px;flex:none}
.q-logo{width:16px;height:18px;margin-right:6px}
.q-sep{width:1px;height:16px;background:#a9b0b5;margin-right:7px}
.slot{width:24px;display:flex;justify-content:center}
.q-drop{width:14px;display:flex;justify-content:center;border-top:1px solid transparent}
.q-run{width:20px;display:flex;justify-content:center}
.apptitle{display:flex;gap:18px;color:#444}
.doc-title{letter-spacing:-.03px}
.winbtns{margin-left:auto;margin-right:-4px;display:flex;align-items:center}
.w-btn{width:14px;height:14px;margin-right:8px}

.tabs{height:22px;flex:none;display:flex;align-items:stretch;border-bottom:1px solid #bfc5c9;position:relative}
.tab-file{width:71px;margin-left:1px;margin-top:2px;background:#2f62b4;border:1px solid #1d4f9e;color:#fff;text-align:center;line-height:18px}
.tab{padding:0 10px;line-height:21px;white-space:nowrap}
.tab-on{margin-left:4px;width:42px;border:1px solid #bfc5c9;border-bottom:0;background:#fcfcfc;height:22px;line-height:22px}
.tabs-right{margin-left:auto;display:flex;align-items:center;height:21px}
.tr-up{width:20px;display:flex;justify-content:center;margin-right:7px}
.search{width:141px;height:19px;background:#fff;border:1px solid #bfc5c9;display:flex;align-items:center;justify-content:space-between;padding:0 6px 0 2px;color:#777;margin-right:5px}
.tr-gear{width:26px;display:flex;justify-content:center}
.tr-help{width:24px;display:flex;justify-content:center}
.helpq{font:bold 11px "Liberation Sans",sans-serif;fill:#fff;text-anchor:middle}
.tr-drop{width:15px;display:flex;justify-content:center}
.tr-win{width:16px;display:flex;justify-content:center}

.ribbon{height:94px;flex:none;background:#fcfcfc;border-bottom:1px solid #bfc5c9;display:flex}
.rgroup{display:flex;flex-direction:column;border-right:1px solid #d3d7da;height:93px}
.g1{width:229px;padding-left:8px}
.g2{width:289px;padding-left:4px}
.g3{width:406px;padding-left:5px}
.g4{width:321px;padding-left:3px}
.g5{width:261px;padding-left:3px}
.g6{width:57px;padding-left:3px}
.rbtns{display:flex;height:75px}
.rb{display:flex;flex-direction:column;align-items:center;flex:none;color:#404040;white-space:nowrap}
.rb .ri{width:32px;height:32px;margin-top:5px}
.rb span{height:14px;line-height:14px;margin-top:4px}
.rb .caret{margin-top:10px}
.w32{width:32px}.w36{width:36px}.w48{width:48px}.w60{width:60px}.w72{width:72px}.w84{width:84px}.w108{width:108px}
.rlabel{text-align:center;color:#6f787e;line-height:16px}
.g1 .rlabel{margin-left:-3px}
.g5 .rlabel{margin-left:-4px}

.toolbar{height:30px;flex:none;display:flex;align-items:center;padding:2px 0 0 3px}
.grip{width:3px;height:20px;margin-right:4px;background:repeating-linear-gradient(#8a9095 0 2px,transparent 2px 4px)}
.tb{width:23px;height:22px;display:flex;align-items:center;justify-content:center;flex:none}
.tb.w24{width:24px}.tb.w23{width:23px}
.tb-on{background:#fbe08e;border:1px solid #d6ab52}
.tb-drop{width:8px;display:flex;justify-content:center}
.dim{opacity:.85}
.vsep{width:1px;height:20px;background:#b9bfc3;flex:none}
.combo{height:20px;background:#fff;border:1px solid #c5cacf;display:flex;align-items:center;justify-content:space-between;padding:0 6px 0 3px;color:#111;flex:none}
.cb-96{width:96px}.cb-131{width:132px;padding-left:4px}.cb-94{width:94px}
.combo-off{background:#e8ebee;color:#8a8f93;padding-left:3px}
.combo-off .caret{border-top-color:#b4b9bc}

.workspace{height:840px;flex:none;display:flex}
.panel{width:355px;flex:none;padding:0 2px}
.phead{height:22px;display:flex;align-items:center;justify-content:space-between;padding:0 6px 2px 2px;color:#444}
.phead-ic{display:flex;align-items:center;margin-right:4px}
.pbody{height:818px;border:1px solid #c5cacf;display:flex}
.rail{width:31px;flex:none;display:flex;flex-direction:column;align-items:flex-start}
.rail-tab{width:31px;height:45px;background:#fafbfc;border-right:1px solid #c5cacf;border-bottom:1px solid #c5cacf;display:flex;align-items:center;justify-content:center}
.rail-ic{width:28px;height:28px}
.rail-i{width:24px;height:24px;margin-left:1px}
.r1{margin-top:59px}.r2{margin-top:24px}.r3{margin-top:23px}
.pcontent{width:318px;flex:none;padding-top:1px}
.mtop{height:24px;display:flex;padding-left:1px}
.mcombo{width:143px;background:#fff;border:1px solid #c5cacf;display:flex;align-items:center;justify-content:space-between;padding:0 6px 0 2px;color:#222}
.msearch{width:144px;margin-left:2px;background:#fff;border:1px solid #c5cacf}
.mfilter{width:23px;margin-left:3px;background:#f6f8f9;border:1px solid #c5cacf;display:flex;align-items:center;justify-content:center}
.tree{margin-top:1px;width:317px;height:687px;border:1px solid #c5cacf;overflow:hidden;background:repeating-linear-gradient(#fff 0 18px,#f4f5f6 18px 36px)}
.row{height:18px;display:flex;align-items:center;white-space:nowrap;color:#333}
.lvl0{padding-left:4px}.lvl0 span{margin-left:3px}
.lvl1{padding-left:1px}
.chev{width:12px;height:12px}
.fold{margin-left:4px;margin-right:3px}
.lvl2{padding-left:31px}
.lvl2 .i16{margin-left:6px;margin-right:3px}
.tight{letter-spacing:-.3px}
.chk{width:13px;height:13px;border:1px solid #333;background:#fff;flex:none}
.chk svg{width:11px;height:11px}
.sel{background:linear-gradient(90deg,transparent 28px,#fbdc97 28px,#fbdc97 171px,transparent 171px)}
.stop{color:#c83232}
.stop-a{width:16px;height:12px;margin-right:4px}
.rphead{margin-top:3px;width:317px;height:22px;background:#fcfcfc;border:1px solid #c5cacf;display:flex;align-items:center;padding-left:4px;font-size:12px;color:#333}
.caret-l{border-width:5px;border-top-width:7px;margin-right:6px;border-top-color:#4a4a4a}
.rphead b{font-weight:700}
.replay{margin-top:1px;width:317px;height:76px;border:1px solid #c5cacf;padding:4px 2px 0 0}
.rp-row{display:flex;justify-content:center;gap:2px}
.rp-row2{margin-top:3px}
.rp{width:35px;height:31px;border:1px solid #d3d7da;background:#e6e9ec;display:flex;align-items:center;justify-content:center}
.rp-on{background:#fbfcfd;border-color:#aeb6bc}

.canvas{flex:1;min-width:0;position:relative;display:flex;flex-direction:column}
.ctabs{height:23px;flex:none;display:flex;align-items:flex-end;padding-left:3px;border-bottom:1px solid #bfc5c9;position:relative;z-index:1}
.ctab{width:366px;height:22px;background:#fff;border:1px solid #c5cacf;border-bottom:0;margin-bottom:-1px;display:flex;align-items:center;padding-left:15px;color:#333;white-space:nowrap}
.ctab-plus{font-size:16px;line-height:16px;color:#6a5a2a;width:14px;flex:none;font-family:"Liberation Sans",sans-serif}
.ctab-name{letter-spacing:-.12px}
.ctab-x{margin-left:auto;margin-right:13px}
.ctab-add{font:700 18px/20px "Liberation Sans",sans-serif;color:#a0a5a8;margin-left:8px}
.ctab-menu{margin-left:auto;margin-right:4px;margin-bottom:5px}
.view{flex:1;position:relative;background:linear-gradient(#fff,#a0a0a0);border-bottom:1px solid #fff}
.hint{position:relative;z-index:1;padding:6px 0 0 22px;line-height:14px;color:#333}
.model{position:absolute;left:0;top:0;width:1564px;height:817px}
.edge{fill:none;stroke:#a2f5a2;stroke-width:2}
.edge .thin{stroke-width:1.2}
.dash{fill:none;stroke:#1c3a1c;stroke-width:1;stroke-dasharray:1 15;opacity:.75}
.tz,.ty,.tx{font:17px "Noto Sans",sans-serif}
.tz{fill:#2026d8}.ty{fill:#2ed82e}.tx{fill:#e02020}
.vtools{position:absolute;left:502px;top:2px;height:22px;display:flex;align-items:center}
.vt{width:24.5px;display:flex;align-items:center;padding-left:4px;flex:none}
.vt-d{width:37px}
.vt .caret{margin-left:6px}
.vt-net{width:39px}
.vt-black{width:16px;height:7px;background:#000;padding:0;margin:0 11px 0 3px}
.vt-orange{width:16px;height:16px;background:#ffb400;border:1px solid #222;padding:0;margin-right:10px}
.vt-layer{width:30px;padding-left:0}
.vt-layer .caret{margin-left:4px}
.layercombo{width:115px;height:22px;background:#fff;border:1px solid #bfc5c9;display:flex;align-items:center;padding-left:4px;color:#111;flex:none}
.lc-dot{margin-left:2px;margin-right:2px}
.layercombo .caret{margin-left:auto;margin-right:6px}
.measure{position:absolute;left:5px;bottom:0;font:17px/24px "Noto Sans",sans-serif;color:#111}

.status{height:28px;flex:none;display:flex;align-items:center;border-top:1px solid #fff;padding-left:6px;position:relative}
.st-text{color:#3c3c3c;width:1460px;flex:none}
.st-sep{width:1px;height:24px;background:#8d9398;flex:none}
.st-btn{width:21px;height:20px;display:flex;align-items:center;justify-content:center;flex:none}
.st-on{background:#fbe08e;border:1px solid #c9a24c;margin-left:15px}
.st-btn+.st-btn{margin-left:8px}
.st-input{margin-left:9px;flex:1;height:22px;background:#fff;border:1px solid #c5cacf;border-right:0}

.ctxmenu{position:absolute;left:163px;top:258px;width:179px;height:579px;padding-top:1px;background:linear-gradient(90deg,#fff 25px,#d9dcdf 25px,#d9dcdf 26px,#fff 26px);border:1px solid #b9bec2;box-shadow:5px 5px 4px rgba(0,0,0,.42);z-index:3}
.mi{height:22px;display:flex;align-items:center;color:#555;white-space:nowrap;margin-right:1px}
.mic{width:18px;height:18px;margin-left:4px;margin-right:9px}
.mi-noicon{margin-left:31px}
.mi-on{background:#fdefb4;outline:1px solid #ebd583;outline-offset:-1px;margin-left:1px;color:#444}
.mi-on .mic{margin-left:3px}
.msep{height:9px;padding-top:2px;margin-left:28px;margin-right:5px}
.msep::before{content:"";display:block;height:1px;background:#a9adb0}

.mark{position:absolute;width:40px;height:40px;border-radius:50%;background:#f44444;color:#fff;font:18px/40px "Noto Sans",sans-serif;text-align:center;z-index:4}
.m1{left:3px;top:243px}
.m2{left:112px;top:583px}
.redbox{position:absolute;border:2px solid #cf1111;z-index:5}
.b1{left:54px;top:251px;width:103px;height:30px}
.b2{left:163px;top:592px;width:104px;height:31px}
```
